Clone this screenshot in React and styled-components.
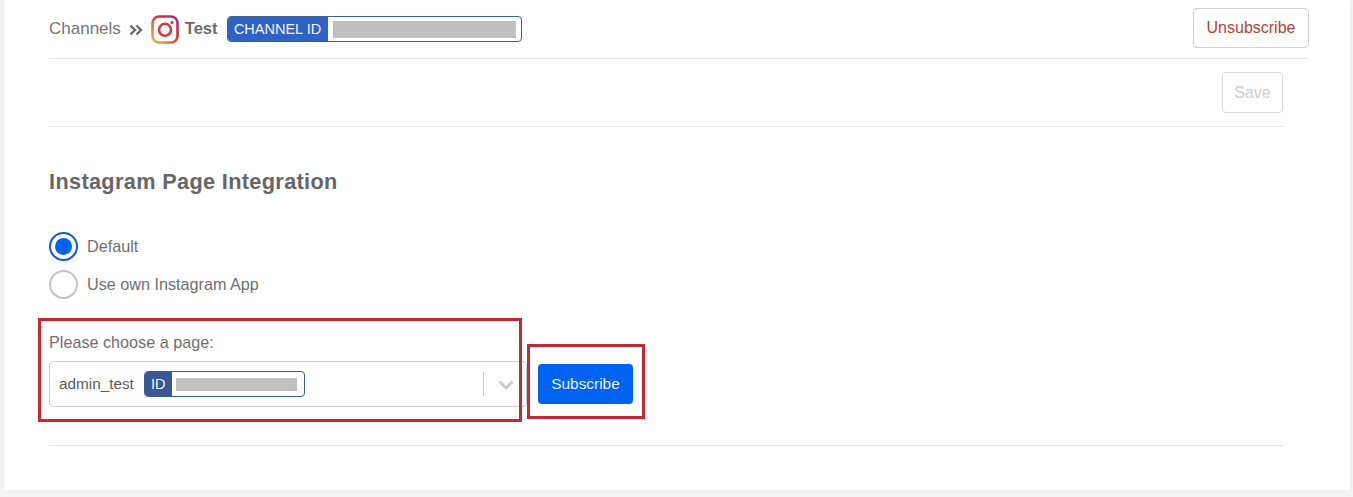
import React from "react";
import styled, { createGlobalStyle } from "styled-components";

const GlobalStyle = createGlobalStyle`
  html, body {
    margin: 0;
    padding: 0;
    background: #f4f4f4;
    font-family: "Liberation Sans", Arial, sans-serif;
    color: #6b6b6b;
  }
`;

const Card = styled.section`
  box-sizing: border-box;
  width: 1346px;
  height: 490px;
  margin-left: 4px;
  padding: 0 41px 0 45px;
  background: #fff;
  box-shadow: 0 0 6px rgba(0, 0, 0, 0.04);
`;

const Header = styled.header`
  box-sizing: border-box;
  height: 59px;
  padding-top: 8px;
  display: flex;
  justify-content: space-between;
  align-items: flex-start;
  border-bottom: 1px solid #e6e6e6;
`;

const Crumbs = styled.div`
  display: flex;
  align-items: center;
  height: 42px;
`;

const CrumbLink = styled.span`
  font-size: 17px;
  color: #757575;
`;

const Arrows = styled.svg`
  width: 14px;
  height: 12px;
  margin: 2px 8px 0 8px;
`;

const ChannelName = styled.strong`
  font-size: 16.5px;
  color: #6b6b6b;
  margin: 0 9px 0 6px;
  position: relative;
  top: -1px;
`;

const Tag = styled.span`
  box-sizing: border-box;
  display: inline-flex;
  align-items: center;
  height: ${(p) => p.$height}px;
  width: ${(p) => p.$width}px;
  border: 1px solid #3d5f92;
  border-radius: 4px;
  overflow: hidden;
  background: #fff;
`;

const TagLabel = styled.span`
  height: 100%;
  display: flex;
  align-items: center;
  justify-content: center;
  width: ${(p) => p.$width}px;
  background: ${(p) => p.$color};
  color: #f2f5fb;
  font-size: 14.5px;
`;

const Redacted = styled.span`
  display: block;
  width: ${(p) => p.$width}px;
  height: ${(p) => p.$height}px;
  margin-left: ${(p) => p.$gap}px;
  background: #c0c0c0;
`;

const OutlineButton = styled.button`
  box-sizing: border-box;
  height: ${(p) => p.$height}px;
  width: ${(p) => p.$width}px;
  padding: 0;
  background: #fff;
  border: 1px solid ${(p) => p.$border};
  border-radius: 4px;
  color: ${(p) => p.$color};
  font-family: inherit;
  font-size: 16px;
`;

const Body = styled.div`
  width: 1234px;
`;

const SaveRow = styled.div`
  box-sizing: border-box;
  height: 68px;
  padding-top: 13px;
  display: flex;
  justify-content: flex-end;
  border-bottom: 1px solid #e6e6e6;
`;

const Title = styled.h2`
  margin: 42px 0 37px;
  font-size: 21.7px;
  line-height: 26px;
  font-weight: 700;
  letter-spacing: 0.35px;
  color: #666;
`;

const RadioRow = styled.label`
  display: flex;
  align-items: center;
  gap: 9px;
  height: 29px;
  margin-bottom: 9px;
  font-size: 16.2px;
  color: #707070;
`;

const RadioDot = styled.span`
  box-sizing: border-box;
  width: 29px;
  height: 29px;
  border-radius: 50%;
  display: flex;
  align-items: center;
  justify-content: center;
  border: ${(p) => (p.$on ? "2px solid #0b5ed7" : "2px solid #c4c4c4")};

  &::after {
    content: "";
    display: ${(p) => (p.$on ? "block" : "none")};
    width: 17px;
    height: 17px;
    border-radius: 50%;
    background: #0062f0;
  }
`;

const ChooseRow = styled.div`
  position: relative;
  display: flex;
  align-items: flex-end;
  gap: 11px;
  margin-top: 34px;
  padding-bottom: 38px;
  border-bottom: 1px solid #e6e6e6;
`;

const Field = styled.div`
  display: flex;
  flex-direction: column;
  gap: 10px;
`;

const FieldLabel = styled.label`
  font-size: 16.2px;
  line-height: 18px;
  color: #707070;
`;

const Select = styled.div`
  box-sizing: border-box;
  width: 478px;
  height: 46px;
  display: flex;
  align-items: center;
  padding-left: 9px;
  border: 1px solid #cfcfcf;
  border-radius: 4px;
`;

const SelectValue = styled.span`
  font-size: 15.3px;
  color: #5c5c5c;
  margin-right: 10px;
`;

const SelectDivider = styled.span`
  width: 1px;
  height: 24px;
  margin-left: auto;
  background: #cccccc;
`;

const Chevron = styled.svg`
  width: 16px;
  height: 10px;
  margin: 2px 12px 0 14px;
`;

const SubscribeButton = styled.button`
  width: 95px;
  height: 40px;
  margin-bottom: 3px;
  padding: 0;
  border: 0;
  border-radius: 4px;
  background: #0062f0;
  color: #eef4ff;
  font-family: inherit;
  font-size: 15.4px;
`;

const Callout = styled.div`
  box-sizing: border-box;
  position: absolute;
  left: ${(p) => p.$left}px;
  top: ${(p) => p.$top}px;
  width: ${(p) => p.$width}px;
  height: ${(p) => p.$height}px;
  border: 3px solid #c32a36;
  pointer-events: none;
`;

function InstagramIcon() {
  return (
    <svg width="28" height="29" viewBox="0 0 28 29" fill="none">
      <defs>
        <linearGradient id="ig" x1="0" y1="1" x2="1" y2="0">
          <stop offset="0" stopColor="#f6b73c" />
          <stop offset="0.35" stopColor="#e8683a" />
          <stop offset="0.65" stopColor="#c9303f" />
          <stop offset="1" stopColor="#a62f86" />
        </linearGradient>
      </defs>
      <rect x="1.5" y="1.5" width="25" height="26" rx="6.5" stroke="url(#ig)" strokeWidth="2.6" />
      <circle cx="14" cy="14.8" r="6" stroke="#c9403f" strokeWidth="2.6" />
      <circle cx="21" cy="7.6" r="1.6" fill="#b8327a" />
    </svg>
  );
}

export default function App() {
  return (
    <>
      <GlobalStyle />
      <Card>
        <Header>
          <Crumbs>
            <CrumbLink>Channels</CrumbLink>
            <Arrows viewBox="0 0 14 12" fill="none" stroke="#6b6b6b" strokeWidth="2.4">
              <path d="M1.5 1.5 6 6l-4.5 4.5" />
              <path d="M7.5 1.5 12 6l-4.5 4.5" />
            </Arrows>
            <InstagramIcon />
            <ChannelName>Test</ChannelName>
            <Tag $width={295} $height={26}>
              <TagLabel $width={100} $color="#2f62c4">CHANNEL ID</TagLabel>
              <Redacted $width={183} $height={17} $gap={5} />
            </Tag>
          </Crumbs>
          <OutlineButton $width={116} $height={40} $border="#d2d2d2" $color="#b5442f">
            Unsubscribe
          </OutlineButton>
        </Header>
        <Body>
          <SaveRow>
            <OutlineButton $width={61} $height={41} $border="#d9d9d9" $color="#cfcfcf">
              Save
            </OutlineButton>
          </SaveRow>
          <Title>Instagram Page Integration</Title>
          <RadioRow>
            <RadioDot $on />
            Default
          </RadioRow>
          <RadioRow>
            <RadioDot />
            Use own Instagram App
          </RadioRow>
          <ChooseRow>
            <Field>
              <FieldLabel>Please choose a page:</FieldLabel>
              <Select>
                <SelectValue>admin_test</SelectValue>
                <Tag $width={161} $height={26}>
                  <TagLabel $width={27} $color="#3a5795">ID</TagLabel>
                  <Redacted $width={121} $height={13} $gap={4} />
                </Tag>
                <SelectDivider />
                <Chevron viewBox="0 0 16 10" fill="none" stroke="#cccccc" strokeWidth="3">
                  <path d="M1.5 1.5 8 8l6.5-6.5" />
                </Chevron>
              </Select>
            </Field>
            <SubscribeButton>Subscribe</SubscribeButton>
            <Callout $left={-11} $top={-15} $width={484} $height={104} />
            <Callout $left={478} $top={11} $width={118} $height={75} />
          </ChooseRow>
        </Body>
      </Card>
    </>
  );
}
